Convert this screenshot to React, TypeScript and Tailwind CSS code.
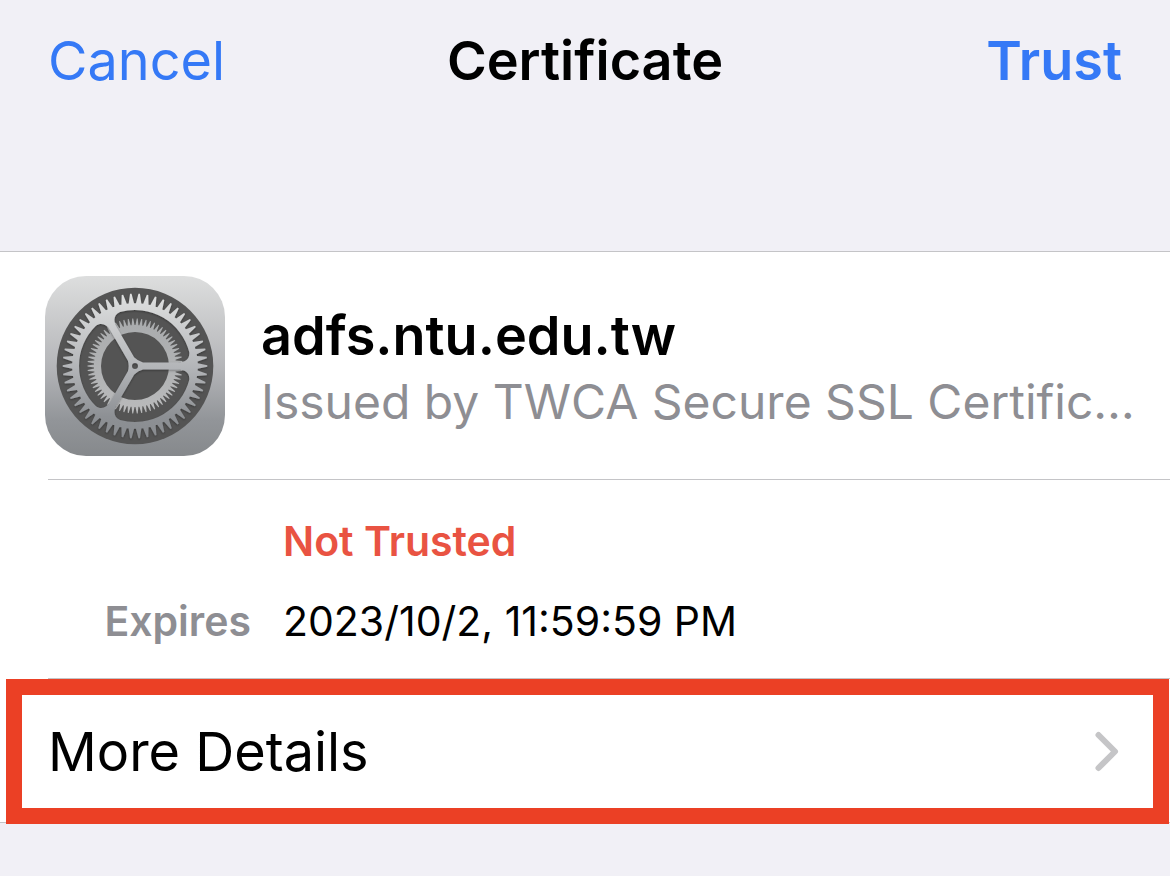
function gearPath(teeth: number, tip: number, root: number, tipShare: number, rootShare: number) {
  const step = (Math.PI * 2) / teeth;
  const at = (radius: number, angle: number) =>
    `${(radius * Math.cos(angle)).toFixed(2)} ${(radius * Math.sin(angle)).toFixed(2)}`;
  let d = "";
  for (let i = 0; i < teeth; i++) {
    const a = i * step;
    d += `${i === 0 ? "M" : "L"}${at(root, a - (step * rootShare) / 2)}`;
    d += `L${at(tip, a - (step * tipShare) / 2)}L${at(tip, a + (step * tipShare) / 2)}`;
    d += `L${at(root, a + (step * rootShare) / 2)}`;
  }
  return d + "Z";
}

function windowPath(turn: number) {
  const rad = Math.PI / 180;
  const p = (x: number, y: number, mirrored = false) => {
    const radius = Math.hypot(x, y);
    let angle = Math.atan2(y, x);
    if (mirrored) angle = -120 * rad - angle;
    angle += turn * rad;
    return `${(radius * Math.cos(angle)).toFixed(2)} ${(radius * Math.sin(angle)).toFixed(2)}`;
  };
  return (
    `M${p(8, -3.6)}L${p(43, -3.6)}C${p(50, -3.8)} ${p(55, -7)} ${p(54.2, -14)}` +
    `A56 56 0 0 0 ${p(54.2, -14, true)}C${p(55, -7, true)} ${p(50, -3.8, true)} ${p(43, -3.6, true)}` +
    `L${p(8, -3.6, true)}Q${p(2.8, -4.85)} ${p(8, -3.6)}Z`
  );
}

const outerGear = gearPath(54, 72.3, 62.8, 0.18, 0.74);
const innerGear = gearPath(66, 47.5, 41, 0.2, 0.78);
const windows = [0, 120, 240].map(windowPath).join("");

function SettingsIcon() {
  return (
    <svg viewBox="0 0 180 180" className="size-[180px] shrink-0" aria-hidden="true">
      <defs>
        <linearGradient id="tile" x1="0" y1="0" x2="0" y2="1">
          <stop offset="0" stopColor="#dddede" />
          <stop offset="0.5" stopColor="#b5b6b9" />
          <stop offset="0.8" stopColor="#929599" />
          <stop offset="1" stopColor="#86898c" />
        </linearGradient>
        <linearGradient id="wheel" x1="0" y1="0" x2="0" y2="1">
          <stop offset="0" stopColor="#dfe0e0" />
          <stop offset="0.5" stopColor="#b4b6b9" />
          <stop offset="0.85" stopColor="#8d9094" />
          <stop offset="1" stopColor="#898c90" />
        </linearGradient>
        <linearGradient id="cog" x1="0" y1="0" x2="0" y2="1">
          <stop offset="0" stopColor="#a9abad" />
          <stop offset="1" stopColor="#b9babb" />
        </linearGradient>
        <filter id="shade" x="-10%" y="-10%" width="120%" height="120%">
          <feDropShadow dx="0" dy="1" stdDeviation="1" floodColor="#000" floodOpacity="0.35" />
        </filter>
      </defs>
      <rect width="180" height="180" rx="41" fill="url(#tile)" />
      <g transform="translate(90 90)">
        <circle r="78.3" fill="#545454" />
        <path
          fill="url(#cog)"
          fillRule="evenodd"
          d={innerGear + "M34 0A34 34 0 1 1 -34 0A34 34 0 1 1 34 0Z"}
        />
        <path
          fill="url(#wheel)"
          fillRule="evenodd"
          filter="url(#shade)"
          d={outerGear + windows + "M3 0A3 3 0 1 1 -3 0A3 3 0 1 1 3 0Z"}
        />
      </g>
    </svg>
  );
}

export default function App() {
  return (
    <div className="min-h-screen bg-[#f1f0f6] font-['Inter','Liberation_Sans',sans-serif] text-black">
      <header className="grid grid-cols-[1fr_auto_1fr] items-center px-12 pt-[25px] pb-[154px] text-[54px] leading-[72px]">
        <button type="button" className="justify-self-start text-[#3579f6]">
          Cancel
        </button>
        <h1 className="font-semibold">Certificate</h1>
        <button type="button" className="justify-self-end font-semibold text-[#3579f6]">
          Trust
        </button>
      </header>

      <main className="border-t border-b border-[#c4c4c7] bg-white">
        <section className="flex items-center gap-9 pt-6 pb-[23px] pl-[45px]">
          <SettingsIcon />
          <div className="min-w-0 flex-1 pt-1">
            <h2 className="text-[54px] leading-[68px] font-semibold">adfs.ntu.edu.tw</h2>
            <p className="text-[48px] leading-[64px] whitespace-nowrap text-[#8e8e93]">
              Issued by TWCA Secure SSL Certific…
            </p>
          </div>
        </section>

        <section className="ml-12 grid grid-cols-[203px_1fr] gap-x-8 gap-y-[22px] border-t border-b border-[#c4c4c7] pt-8 pb-7 text-[41px] leading-[58px]">
          <p className="col-start-2 font-semibold text-[#e95342]">Not Trusted</p>
          <p className="text-right font-semibold text-[#8e8e93]">Expires</p>
          <p>2023/10/2, 11:59:59 PM</p>
        </section>

        <button
          type="button"
          className="-mb-[2px] ml-[6px] flex w-[calc(100%-7px)] items-center justify-between border-[16px] border-[#eb4025] bg-white py-5 pr-[33px] pl-[26px] text-left text-[54px] leading-[73px]"
        >
          <span>More Details</span>
          <svg viewBox="0 0 26 42" className="h-[42px] w-[26px]" fill="none" aria-hidden="true">
            <path
              d="M4.500 4L21 20.500L4.500 37"
              stroke="#c5c5c7"
              strokeWidth="6"
              strokeLinecap="round"
              strokeLinejoin="round"
            />
          </svg>
        </button>
      </main>
    </div>
  );
}
